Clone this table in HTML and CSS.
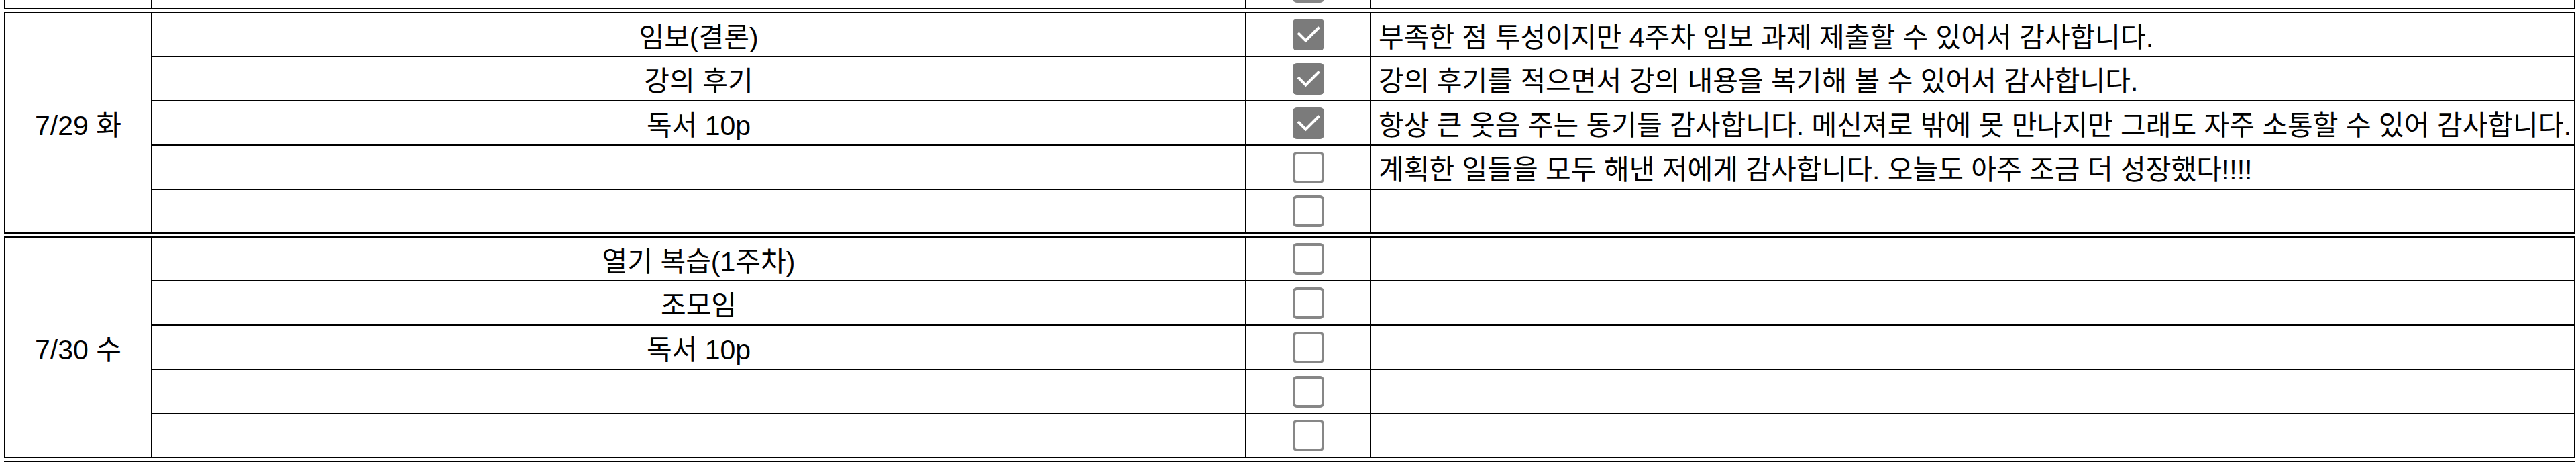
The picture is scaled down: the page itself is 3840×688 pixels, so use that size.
FILE: index.html
```html
<!DOCTYPE html>
<html lang="ko">

<head>
  <meta charset="utf-8">
  <title>감사 일기</title>
  <link rel="stylesheet" href="styles.css">
</head>

<body>
  <!-- 스크롤된 상태의 주간 표 -->
  <div class="sheet">

    <div class="day">
      <div class="date"></div>
      <div class="task"></div>
      <div class="check"><span class="box"></span></div>
      <div class="note"></div>
    </div>

    <div class="day">
      <div class="date">7/29 화</div>
      <div class="task">임보(결론)</div>
      <div class="check">
        <span class="box checked"><svg viewBox="0 0 47 47"><polyline points="8,21 19.5,32.5 39.5,12.5"/></svg></span>
      </div>
      <div class="note">부족한 점 투성이지만 4주차 임보 과제 제출할 수 있어서 감사합니다.</div>

      <div class="task">강의 후기</div>
      <div class="check">
        <span class="box checked"><svg viewBox="0 0 47 47"><polyline points="8,21 19.5,32.5 39.5,12.5"/></svg></span>
      </div>
      <div class="note">강의 후기를 적으면서 강의 내용을 복기해 볼 수 있어서 감사합니다.</div>

      <div class="task">독서 10p</div>
      <div class="check">
        <span class="box checked"><svg viewBox="0 0 47 47"><polyline points="8,21 19.5,32.5 39.5,12.5"/></svg></span>
      </div>
      <div class="note">항상 큰 웃음 주는 동기들 감사합니다. 메신져로 밖에 못 만나지만 그래도 자주 소통할 수 있어 감사합니다.</div>

      <div class="task"></div>
      <div class="check"><span class="box"></span></div>
      <div class="note">계획한 일들을 모두 해낸 저에게 감사합니다. 오늘도 아주 조금 더 성장했다!!!!</div>

      <div class="task"></div>
      <div class="check"><span class="box"></span></div>
      <div class="note"></div>
    </div>

    <div class="day">
      <div class="date">7/30 수</div>
      <div class="task">열기 복습(1주차)</div>
      <div class="check"><span class="box"></span></div>
      <div class="note"></div>

      <div class="task">조모임</div>
      <div class="check"><span class="box"></span></div>
      <div class="note"></div>

      <div class="task">독서 10p</div>
      <div class="check"><span class="box"></span></div>
      <div class="note"></div>

      <div class="task"></div>
      <div class="check"><span class="box"></span></div>
      <div class="note"></div>

      <div class="task"></div>
      <div class="check"><span class="box"></span></div>
      <div class="note"></div>
    </div>

    <div class="day">
      <div class="date"></div>
      <div class="task"></div>
      <div class="check"><span class="box"></span></div>
      <div class="note"></div>
    </div>

  </div>
</body>

</html>
```

FILE: styles.css
```css
/* 전체 */
html {
  overflow: hidden;
}

body {
  margin: 0;
  background: #fff;
  color: #000;
  font-family: "Liberation Sans", "Noto Sans CJK KR", sans-serif;
  font-size: 41px;
}

.sheet {
  display: flex;
  flex-direction: column;
  gap: 4px;
  margin-top: -53px;
  padding-left: 6px;
}

/* 하루 단위 표 */
.day {
  display: grid;
  grid-template-columns: 217px 1629px 184px 1793px;
  grid-template-rows: 63px 64px 64px 64px 63px;
  gap: 2px;
  width: max-content;
  background: #000;
  border: 2px solid #000;
}

.day:first-child,
.day:last-child {
  grid-template-rows: 63px;
}

.day > div {
  background: #fff;
  display: flex;
  align-items: center;
  white-space: nowrap;
  overflow: hidden;
}

.date {
  grid-row: 1 / -1;
  justify-content: center;
}

.task {
  justify-content: center;
}

.check {
  justify-content: center;
}

.note {
  padding-left: 11px;
}

/* 체크박스 */
.box {
  box-sizing: border-box;
  width: 47px;
  height: 47px;
  border: 4px solid #878787;
  border-radius: 6px;
  background: #fff;
}

.box.checked {
  border: 0;
  background: #7b7b7b;
}

.box svg {
  display: block;
  width: 47px;
  height: 47px;
}

.box polyline {
  fill: none;
  stroke: #fff;
  stroke-width: 4;
}
```
